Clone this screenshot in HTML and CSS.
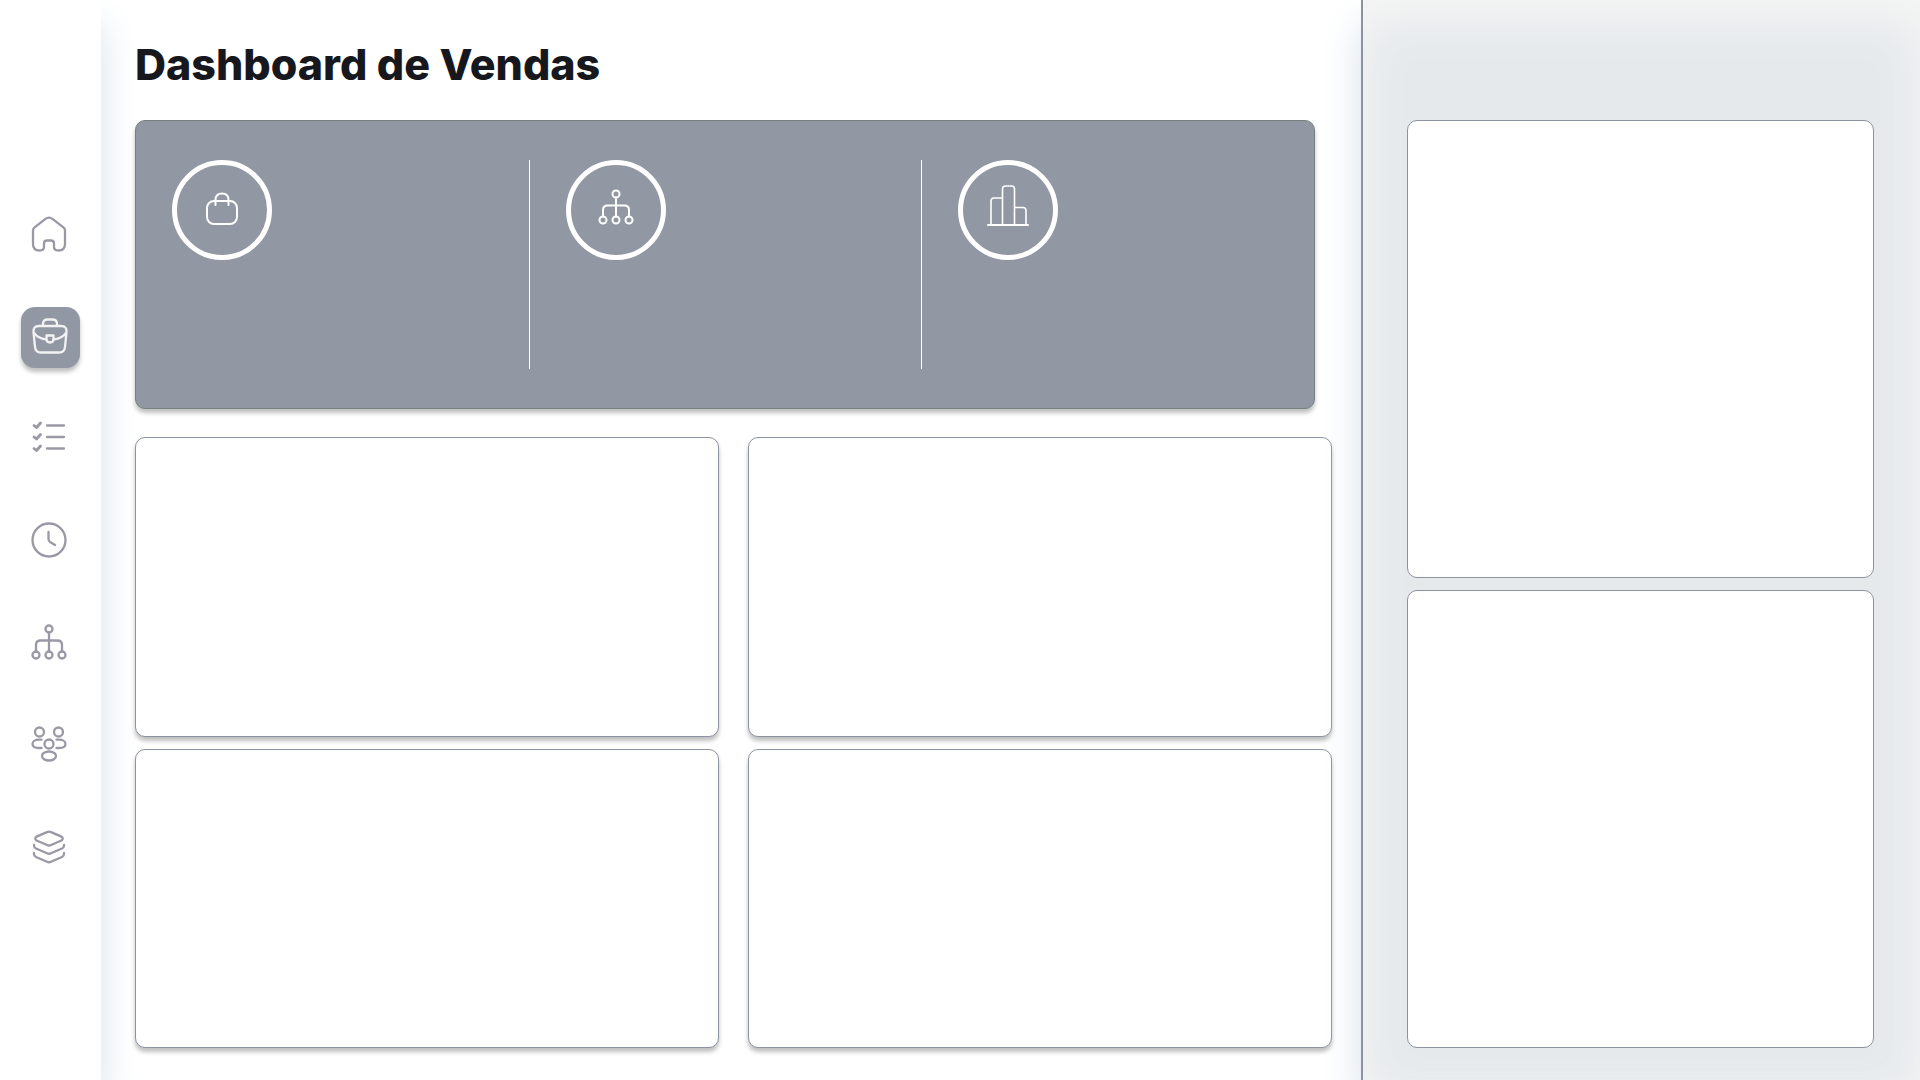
FILE: index.html
```html
<!DOCTYPE html>
<html lang="pt-BR">

<head>
  <meta charset="UTF-8" />
  <meta name="viewport" content="width=device-width, initial-scale=1.0" />
  <title>Dashboard de Vendas</title>
  <link rel="stylesheet" href="styles.css">
</head>

<body>
  <nav class="sidebar">
    <a href="#" class="nav-item" aria-label="Início">
      <svg width="36" height="36" viewBox="0 0 36 36">
        <path d="M2 14.5Q2 12.5 3.6 11.3L14.2 3.1Q18 .2 21.8 3.1L32.4 11.3Q34 12.5 34 14.5V28Q34 34.5 27.5 34.5Q23 34.5 23 31V27.5Q23 24.5 20 24.5H16Q13 24.5 13 27.5V31Q13 34.5 8.5 34.5Q2 34.5 2 28Z" />
      </svg>
    </a>
    <a href="#" class="nav-item active" aria-label="Vendas">
      <svg width="36" height="36" viewBox="0 0 36 36">
        <path d="M11 8V6Q11 1.5 15.5 1.5H20.5Q25 1.5 25 6V8" />
        <path d="M7 8H29Q35 8 34.5 14L33 29Q32.5 34.5 27 34.5H9Q3.5 34.5 3 29L1.5 14Q1 8 7 8Z" />
        <path d="M2 15Q6 20.5 14 21.3M34 15Q30 20.5 22 21.3" />
        <path d="M14.5 17.5H21.5V21Q21.5 24.5 18 24.5Q14.5 24.5 14.5 21Z" />
      </svg>
    </a>
    <a href="#" class="nav-item" aria-label="Tarefas">
      <svg width="36" height="36" viewBox="0 0 36 36">
        <path class="checks" d="M3 5.5L5.5 7.5L9.5 3M3 17L5.5 19L9.5 14.5M3 28.5L5.5 30.5L9.5 26" />
        <path d="M16 5.5H33M16 17H33M16 28.5H33" />
      </svg>
    </a>
    <a href="#" class="nav-item" aria-label="Histórico">
      <svg width="36" height="36" viewBox="0 0 36 36">
        <circle cx="18" cy="18" r="16.5" />
        <path d="M17.5 10V17Q17.5 19 19 20L24 23" />
      </svg>
    </a>
    <a href="#" class="nav-item" aria-label="Organização">
      <svg width="36" height="36" viewBox="0 0 36 36">
        <circle cx="18" cy="5" r="3.5" />
        <circle cx="5" cy="31" r="3.5" />
        <circle cx="18" cy="31" r="3.5" />
        <circle cx="31" cy="31" r="3.5" />
        <path d="M18 8.5V27.5M5 27.5V21Q5 16.5 9.5 16.5H26.5Q31 16.5 31 21V27.5" />
      </svg>
    </a>
    <a href="#" class="nav-item" aria-label="Equipe">
      <svg width="36" height="36" viewBox="0 0 36 36">
        <circle cx="8.5" cy="6" r="4.5" />
        <circle cx="27.5" cy="6" r="4.5" />
        <circle cx="18" cy="18" r="4.5" />
        <ellipse cx="18" cy="30" rx="7" ry="4.5" />
        <path d="M10.5 13.7H8C4.2 13.7 1.5 15.5 1.5 18S4.2 22 8 22H10.5M25.5 13.7H28C31.8 13.7 34.5 15.5 34.5 18S31.8 22 28 22H25.5" />
      </svg>
    </a>
    <a href="#" class="nav-item" aria-label="Camadas">
      <svg width="36" height="36" viewBox="0 0 36 36">
        <path d="M16 4.1Q18 3.2 20 4.1L30.5 8.6Q33 10.5 30.5 12.5L20 17Q18 18 16 17L5.5 12.5Q3 10.5 5.5 8.6Z" />
        <path d="M3 17V17.5Q3 19.5 5 20.5L16 25.3Q18 26.2 20 25.3L31 20.5Q33 19.5 33 17.5V17" />
        <path d="M3 25V26Q3 28 5 29L16 33.8Q18 34.7 20 33.8L31 29Q33 28 33 26V25" />
      </svg>
    </a>
  </nav>

  <main class="content">
    <h1>Dashboard de Vendas</h1>

    <section class="summary">
      <div class="kpi">
        <div class="kpi-icon">
          <svg width="40" height="40" viewBox="0 0 40 40">
            <rect x="5" y="11" width="30" height="23" rx="7" />
            <path d="M13.5 15V10Q13.5 3.5 20 3.5Q26.5 3.5 26.5 10V15" />
          </svg>
        </div>
      </div>
      <div class="kpi">
        <div class="kpi-icon">
          <svg width="40" height="40" viewBox="0 0 40 40">
            <circle cx="20" cy="4" r="3.5" />
            <circle cx="7" cy="30" r="3.5" />
            <circle cx="20" cy="30" r="3.5" />
            <circle cx="33" cy="30" r="3.5" />
            <path d="M20 7.5V26.5M7 26.5V20Q7 15.5 11.5 15.5H28.5Q33 15.5 33 20V26.5" />
          </svg>
        </div>
      </div>
      <div class="kpi">
        <div class="kpi-icon bars">
          <svg width="42" height="42" viewBox="0 0 42 42">
            <path d="M4 41V17Q4 14 7 14H15.5M15.5 41V5Q15.5 2 18.5 2H24.5Q27.5 2 27.5 5V41M27.5 23.5H36Q39 23.5 39 26.5V41" />
            <path class="base" d="M1 41H41" />
          </svg>
        </div>
      </div>
    </section>

    <section class="charts">
      <div class="card"></div>
      <div class="card"></div>
      <div class="card"></div>
      <div class="card"></div>
    </section>
  </main>

  <aside class="panel">
    <div class="card"></div>
    <div class="card"></div>
  </aside>
</body>

</html>
```
FILE: styles.css
```css
:root {
  --gray: #9197a3;
  --icon: #9b98a6;
  --border: #8c92a0;
  --panel: #e5e9ec;
  --text: #17181e;
  --glow: #d8e2ea;
}

* {
  box-sizing: border-box;
}

body {
  margin: 0;
  min-height: 100vh;
  display: grid;
  grid-template-columns: 101px 1260fr 559fr;
  font-family: Inter, 'Open Sans', sans-serif;
  background: #fff;
  color: var(--text);
}

svg {
  display: block;
  overflow: visible;
  fill: none;
  stroke: currentColor;
  stroke-width: 2;
  stroke-linecap: round;
  stroke-linejoin: round;
}

.sidebar {
  padding: 205px 0 0 21px;
  display: flex;
  flex-direction: column;
  gap: 41px;
  background: #fff;
  box-shadow: 0 24px 38px var(--glow);
}

.nav-item {
  display: flex;
  align-items: center;
  justify-content: center;
  width: 59px;
  height: 61px;
  padding: 0 3px 4px 0;
  border-radius: 14px;
  color: var(--icon);
}

.nav-item svg {
  stroke-width: 2.3;
}

.nav-item .checks {
  stroke-width: 2.8;
}

.nav-item.active {
  padding-right: 1px;
  background: var(--gray);
  color: #f2f2f2;
  box-shadow: 0 4px 4px rgba(0, 0, 0, 0.25);
}

.content {
  display: flex;
  flex-direction: column;
  padding: 40px 29px 32px 34px;
}

h1 {
  margin: 0 0 32px;
  font-size: 43px;
  line-height: 48px;
  font-weight: 800;
}

.summary {
  display: grid;
  grid-template-columns: repeat(3, 1fr);
  height: 289px;
  margin: 0 17px 28px 0;
  padding: 39px 0;
  background: var(--gray);
  border: 1px solid #75817f;
  border-radius: 10px;
  box-shadow: 0 4px 4px rgba(0, 0, 0, 0.25);
}

.kpi {
  padding-left: 36px;
}

.kpi + .kpi {
  border-left: 1px solid #fff;
}

.kpi-icon {
  display: flex;
  align-items: center;
  justify-content: center;
  width: 100px;
  height: 100px;
  border: 5px solid #fff;
  border-radius: 50%;
  color: #fff;
}

.kpi-icon.bars {
  padding-bottom: 10px;
}

.kpi-icon.bars svg {
  stroke-width: 1.6;
}

.kpi-icon.bars .base {
  stroke-width: 2;
}

.charts {
  flex: 1;
  display: grid;
  grid-template-columns: 1fr 1fr;
  grid-template-rows: 1fr 1fr;
  gap: 12px 29px;
}

.card {
  background: #fff;
  border: 1px solid var(--border);
  border-radius: 10px;
}

.charts .card {
  box-shadow: 0 4px 4px rgba(0, 0, 0, 0.25);
}

.panel {
  padding: 120px 46px 32px 44px;
  display: grid;
  grid-template-rows: 1fr 1fr;
  gap: 12px;
  background: var(--panel);
  border-left: 2px solid var(--border);
  box-shadow: 0 24px 38px var(--glow), inset 0 18px 50px #f6f6f5;
}
```
